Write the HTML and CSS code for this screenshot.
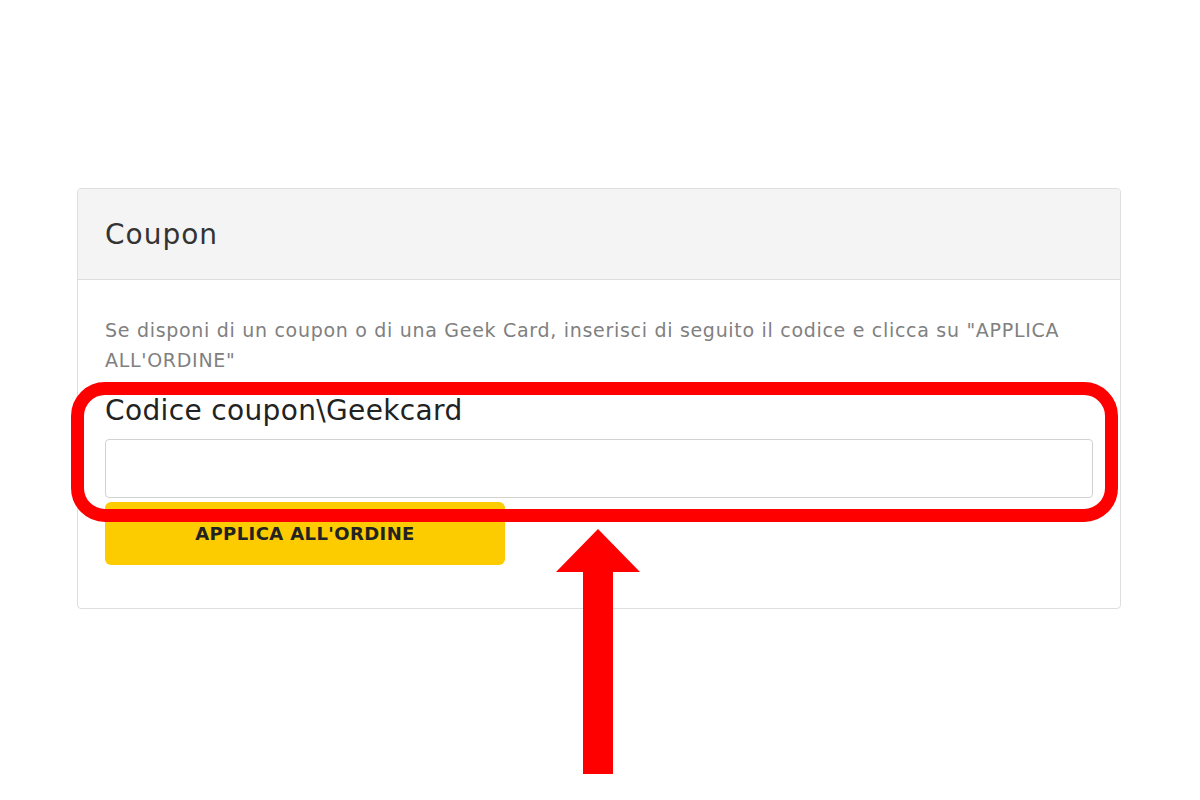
FILE: index.html
```html
<!DOCTYPE html>
<html lang="it">
<head>
  <meta charset="UTF-8">
  <title>Coupon</title>
  <link rel="stylesheet" href="styles.css">
</head>
<body>
  <div class="page">
    <div class="card">
      <div class="card-header">
        <h3>Coupon</h3>
      </div>
      <div class="card-body">
        <p class="hint">Se disponi di un coupon o di una Geek Card, inserisci di seguito il codice e clicca su "APPLICA ALL'ORDINE"</p>
        <label for="coupon">Codice coupon\Geekcard</label>
        <input type="text" id="coupon">
        <button class="btn-apply">APPLICA ALL'ORDINE</button>
      </div>
    </div>

    <!-- red annotation drawn over the form -->
    <div class="highlight"></div>
    <svg class="arrow" viewBox="0 0 84 246" width="84" height="246">
      <polygon points="42,0 84,43 57,43 57,245 27,245 27,43 0,43" fill="#ff0000"/>
    </svg>
  </div>
</body>
</html>
```

FILE: styles.css
```css
body {
  margin: 0;
  background: #fff;
  font-family: "DejaVu Sans", "Open Sans", sans-serif;
  color: #222;
}

.page {
  position: relative;
  height: 800px;
  padding: 188px 79px 0 77px;
  box-sizing: border-box;
}

.card {
  border: 1px solid #dedede;
  border-radius: 4px;
  background: #fff;
}

.card-header {
  background: #f4f4f4;
  border-bottom: 1px solid #dcdcdc;
  border-radius: 4px 4px 0 0;
  height: 90px;
  display: flex;
  align-items: center;
  padding: 0 27px;
}

.card-header h3 {
  margin: 0;
  font-size: 28px;
  font-weight: normal;
  letter-spacing: 1px;
  color: #333;
}

.card-body {
  padding: 35px 27px 43px 27px;
  display: flex;
  flex-direction: column;
  align-items: flex-start;
}

.hint {
  margin: 0 0 21px;
  font-size: 19px;
  letter-spacing: 0.7px;
  line-height: 30px;
  color: #808080;
}

label {
  font-size: 28px;
  letter-spacing: 0.35px;
  line-height: 30px;
  margin-bottom: 13px;
  color: #222;
}

input[type="text"] {
  width: 100%;
  height: 59px;
  box-sizing: border-box;
  border: 1px solid #d2d2d2;
  border-radius: 4px;
  margin: 0 0 4px;
}

.btn-apply {
  width: 400px;
  height: 63px;
  border: none;
  border-radius: 6px;
  background: #fccb00;
  color: #222;
  font-family: inherit;
  font-size: 18px;
  font-weight: bold;
  letter-spacing: 0.4px;
}

.highlight {
  position: absolute;
  left: 71px;
  top: 382px;
  width: 1047px;
  height: 140px;
  box-sizing: border-box;
  border: 13px solid #ff0000;
  border-radius: 34px;
}

.arrow {
  position: absolute;
  left: 556px;
  top: 529px;
}
```
